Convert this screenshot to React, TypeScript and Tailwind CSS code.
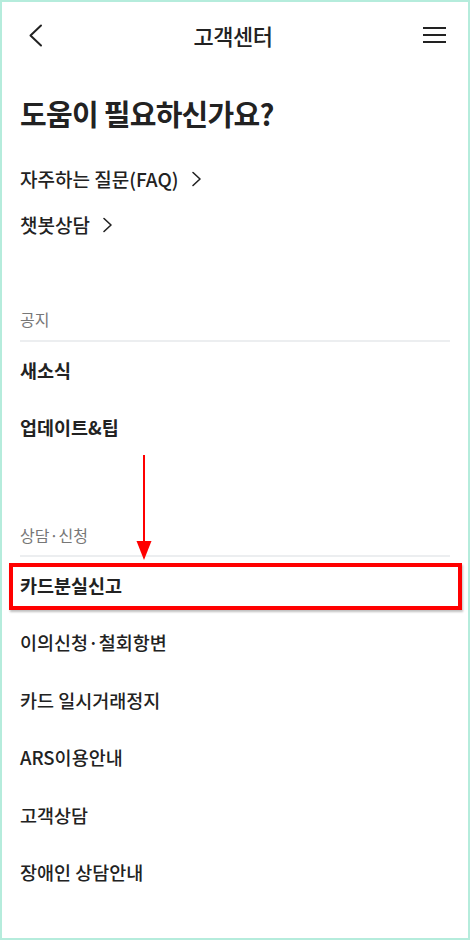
import React from 'react';

const font = { fontFamily: '"Noto Sans CJK KR", "Noto Sans", sans-serif' };

const Chevron = () => (
    <svg width="11" height="16" viewBox="0 0 11 16" fill="none" className="ml-3">
        <path d="M2 1.5 L9 8 L2 14.5" stroke="#222" strokeWidth="1.6" strokeLinecap="round" strokeLinejoin="round" />
    </svg>
);

const SectionLabel = ({ children, gap }: { children: React.ReactNode; gap: string }) => (
    <div className={`border-b-2 border-[#eceef0] ${gap}`}>
        <div className="h-[20px] leading-[20px] text-[16px] text-[#777]">{children}</div>
    </div>
);

const Row = ({ label, bold }: { label: string; bold?: boolean }) => (
    <div className={`h-[57.5px] flex items-center text-[18.5px] text-[#222] ${bold ? 'font-bold' : 'font-medium'}`}>
        {label}
    </div>
);

const App = () => {
    return (
        <div style={font} className="relative w-[470px] h-[940px] border-2 border-[#b5ecdc] bg-white overflow-hidden">
            <div className="h-[66px] flex items-center justify-between px-[26px]">
                <svg width="15" height="23" viewBox="0 0 15 23" fill="none">
                    <path d="M13 1.5 L2.5 11.5 L13 21.5" stroke="#222" strokeWidth="2" strokeLinecap="round" strokeLinejoin="round" />
                </svg>
                <h1 className="text-[22px] font-medium text-[#222] tracking-tight">고객센터</h1>
                <svg width="23" height="18" viewBox="0 0 23 18" fill="none" className="-mr-[4px]">
                    <path d="M0 2 H23 M0 9 H23 M0 16 H23" stroke="#222" strokeWidth="2" />
                </svg>
            </div>

            <div className="px-[18px]">
                <h2 className="mt-[27px] h-[36px] leading-[36px] text-[29px] font-bold text-[#222] tracking-tight">
                    도움이 필요하신가요?
                </h2>

                <div className="mt-[25px]">
                    <div className="h-[46px] flex items-center text-[19px] font-medium text-[#222]">
                        자주하는 질문(FAQ) <Chevron />
                    </div>
                    <div className="h-[46px] flex items-center text-[19px] font-medium text-[#222]">
                        챗봇상담 <Chevron />
                    </div>
                </div>

                <div className="mt-[61px]">
                    <SectionLabel gap="pb-[11px]">공지</SectionLabel>
                    <Row label="새소식" bold />
                    <Row label="업데이트&팁" bold />
                </div>

                <div className="mt-[68px]">
                    <SectionLabel gap="pb-[10px]">상담·신청</SectionLabel>
                    <Row label="카드분실신고" bold />
                    <Row label="이의신청·철회항변" />
                    <Row label="카드 일시거래정지" />
                    <Row label="ARS이용안내" />
                    <Row label="고객상담" />
                    <Row label="장애인 상담안내" />
                </div>
            </div>

            {/* annotation overlay */}
            <div className="absolute left-[7px] top-[561px] w-[453px] h-[47px] border-[4px] border-[#ff0000] shadow-[1px_2px_2px_rgba(0,0,0,0.25)]" />
            <svg className="absolute left-[133px] top-[453px]" width="18" height="105" viewBox="0 0 18 105" fill="none">
                <path d="M9 0 V88" stroke="#f00" strokeWidth="2" />
                <path d="M1.5 86 L16.5 86 L9 105 Z" fill="#f00" />
            </svg>
        </div>
    );
};

export default App;
